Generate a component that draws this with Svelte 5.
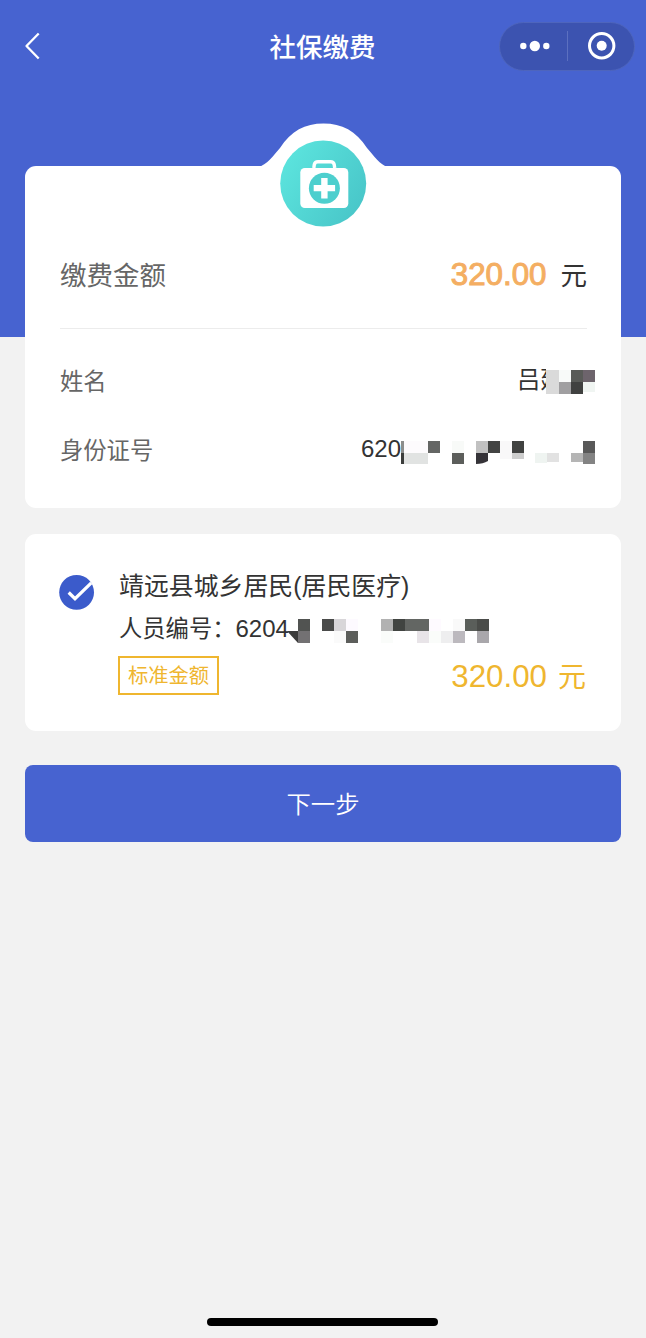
<script>
  const payment = { amount: '320.00', unit: '元', name: '吕廷', idPrefix: '620', personPrefix: '6204' };

  // mosaic cells: [x, y, width, height, colour]
  const nameCells = [
    [0, 4, 13, 24, '#dadada'], [13, 4, 12, 12, '#f8faf9'], [25, 4, 12, 12, '#595b58'], [37, 4, 12, 12, '#6d646c'],
    [13, 16, 12, 12, '#a09fa1'], [25, 16, 12, 12, '#404140'], [37, 16, 12, 10, '#f0f5f2']
  ];
  const idCells = [
    [0, 0, 3, 12, '#8c8e8c'], [0, 12, 3, 11, '#3b3d3b'], [3, 0, 24, 12, '#fdfbfd'], [3, 12, 24, 11, '#e1e3e2'],
    [27, 0, 12, 12, '#646664'], [51, 0, 12, 12, '#f8faf8'], [51, 12, 12, 11, '#5c5e5b'], [75, 0, 12, 12, '#c1c1c1'],
    [87, 0, 12, 12, '#434443'], [99, 0, 12, 18, '#f9f8f9'], [111, 0, 12, 12, '#414241'], [111, 12, 12, 6, '#cdcdcd'],
    [134, 12, 12, 10, '#eff4f1'], [146, 12, 12, 9, '#e2e2e2'], [170, 12, 12, 9, '#b5b5b5'],
    [182, 0, 12, 12, '#595959'], [182, 12, 12, 11, '#838383']
  ];
  const personCells = [
    [11, 0, 12, 12, '#515351'], [11, 12, 12, 12, '#737173'], [35, 0, 12, 12, '#4a4b4a'], [47, 0, 12, 12, '#d8d6d9'],
    [47, 12, 12, 12, '#fafafa'], [59, 0, 12, 12, '#fdfaff'], [59, 12, 12, 12, '#5c5e5b'], [94, 0, 12, 12, '#b2b2b2'],
    [94, 12, 12, 12, '#fafcfa'], [106, 0, 12, 12, '#414441'], [118, 0, 24, 12, '#636663'], [130, 12, 12, 12, '#e8e4e8'],
    [142, 0, 12, 12, '#fefaff'], [142, 12, 12, 12, '#fafcfa'], [154, 12, 12, 12, '#eeeeef'], [166, 0, 12, 12, '#f9f9f9'],
    [166, 12, 12, 12, '#bcb9be'], [178, 0, 12, 12, '#5a5e5a'], [190, 0, 12, 12, '#4a4c49'], [190, 12, 12, 12, '#a9a7ab']
  ];
</script>

{#snippet cells(list)}
  {#each list as [x, y, width, height, fill]}
    <rect {x} {y} {width} {height} {fill} />
  {/each}
{/snippet}

<div class="page">
  <header class="hero">
    <nav class="navbar">
      <svg class="back" width="16" height="28" viewBox="0 0 16 28" aria-label="返回">
        <path d="M14.7 1.5 2.5 14 14.7 26.5" fill="none" stroke="#fff" stroke-width="2.3" stroke-linejoin="round" />
      </svg>
      <h1 class="title">社保缴费</h1>
      <div class="capsule">
        <svg width="67" height="46" viewBox="0 0 67 46">
          <circle cx="23.3" cy="23" r="3.2" fill="#fff" />
          <circle cx="34.8" cy="23" r="5.2" fill="#fff" />
          <circle cx="46.3" cy="23" r="3.2" fill="#fff" />
        </svg>
        <span class="capsule-line"></span>
        <svg width="66" height="46" viewBox="0 0 66 46">
          <circle cx="33.7" cy="22.7" r="12.2" fill="none" stroke="#fff" stroke-width="3" />
          <circle cx="33.7" cy="22.7" r="5" fill="#fff" />
        </svg>
      </div>
    </nav>
  </header>

  <main class="content">
    <section class="card summary">
      <svg class="badge" width="130" height="106" viewBox="0 0 130 106">
        <defs>
          <linearGradient id="teal" x1="0" y1="0.2" x2="1" y2="0.8">
            <stop offset="0" stop-color="#5ce5de" />
            <stop offset="1" stop-color="#48c5c8" />
          </linearGradient>
        </defs>
        <path d="M0 44C9 42 15 33 22 25C33 8 47 .6 65.5 .6S98 8 109 25C116 33 122 42 130 44V50H0Z" fill="#fff" />
        <circle cx="65.2" cy="60.6" r="43" fill="url(#teal)" />
        <path d="M55.8 45L56.3 41.5Q57 38.8 60 38.8H72.5Q75.5 38.8 76.2 41.5L76.7 45" fill="none" stroke="#fff" stroke-width="3.4" />
        <rect x="42.3" y="45" width="48" height="40" rx="4.5" fill="#fff" />
        <circle cx="66.4" cy="65.3" r="15.5" fill="#4dcfce" />
        <path d="M63.2 55h6.4v7.1h7.5v6.2h-7.5v7.3h-6.4v-7.3h-7.5v-6.2h7.5z" fill="#fff" />
      </svg>

      <div class="row amount-row">
        <span class="amount-label">缴费金额</span>
        <span class="amount"><b>{payment.amount}</b><span class="unit">{payment.unit}</span></span>
      </div>
      <div class="row name-row">
        <span>姓名</span>
        <span class="value name-value">
          {payment.name}
          <svg class="mask mask-name" width="49" height="28">{@render cells(nameCells)}</svg>
        </span>
      </div>
      <div class="row id-row">
        <span>身份证号</span>
        <span class="value id-value">
          {payment.idPrefix}
          <svg class="mask mask-id" width="194" height="24">
            {@render cells(idCells)}
            <path d="M75 12h12v8q-5 3-12 3z" fill="#353338" />
          </svg>
        </span>
      </div>
    </section>

    <section class="card plan">
      <svg class="check" width="36" height="36" viewBox="0 0 36 36">
        <circle cx="17.6" cy="18.4" r="17.4" fill="#3b5bcb" />
        <path d="M9.7 18.5 16 24.7 32.3 8.8" fill="none" stroke="#fff" stroke-width="3.2" />
      </svg>
      <div class="plan-body">
        <h2 class="plan-title">靖远县城乡居民(居民医疗)</h2>
        <p class="person">
          人员编号：<span class="digits">{payment.personPrefix}</span>
          <svg class="mask mask-person" width="202" height="24">
            {@render cells(personCells)}
            <path d="M0 12h11v12z" fill="#3b3b3b" />
          </svg>
        </p>
        <div class="standard">
          <span class="tag">标准金额</span>
          <span class="price">{payment.amount}<span class="price-unit">{payment.unit}</span></span>
        </div>
      </div>
    </section>

    <button class="next" type="button">下一步</button>
  </main>

  <div class="home-indicator"></div>
</div>

<style>
  :global(body) {
    background: #f2f2f2;
  }

  .page {
    box-sizing: border-box;
    display: flex;
    flex-direction: column;
    height: 1338px;
    overflow: hidden;
    background: #f2f2f2;
    color: #333;
    font-family: "Liberation Sans", "Noto Sans CJK SC", sans-serif;
    font-size: 23.3px;
  }

  .hero {
    flex: none;
    height: 337px;
    background: #4763d0;
  }

  .navbar {
    box-sizing: border-box;
    display: grid;
    grid-template-columns: 146px 1fr 146px;
    align-items: center;
    height: 92px;
    padding: 0 11px 0 0;
  }

  .back {
    margin-left: 24px;
  }

  .title {
    margin: 0;
    padding: 3px 0 0 10px;
    color: #fff;
    font-size: 26.5px;
    font-weight: 500;
    line-height: 40px;
    text-align: center;
  }

  .capsule {
    box-sizing: border-box;
    display: flex;
    align-items: center;
    justify-self: end;
    width: 136px;
    height: 49px;
    border: 1px solid #4e65bd;
    border-radius: 25px;
    background: #3c53b0;
  }

  .capsule-line {
    width: 1px;
    height: 30px;
    background: #5c70c0;
  }

  .content {
    display: flex;
    flex-direction: column;
    margin: -171px 25px 0;
  }

  .card {
    box-sizing: border-box;
    position: relative;
    border-radius: 11px;
    background: #fff;
  }

  .summary {
    height: 342px;
    padding: 55px 34px 0 35px;
    color: #666;
  }

  .badge {
    position: absolute;
    top: -43px;
    left: 233px;
  }

  .row {
    display: flex;
    align-items: center;
    justify-content: space-between;
  }

  .amount-row {
    box-sizing: border-box;
    height: 108px;
    padding-bottom: 3px;
    border-bottom: 1px solid #ececec;
  }

  .amount-label {
    font-size: 26.5px;
  }

  .amount {
    display: flex;
    align-items: baseline;
    gap: 14px;
    color: #333;
  }

  .amount b {
    color: #f4ae62;
    font-size: 31.3px;
    font-weight: 400;
    -webkit-text-stroke: 1px #f4ae62;
  }

  .unit {
    font-size: 26.5px;
  }

  .name-row {
    height: 70px;
    padding-top: 16px;
  }

  .id-row {
    height: 69px;
    margin-top: -17px;
    padding-top: 16px;
  }

  .value {
    position: relative;
    color: #333;
    line-height: 34px;
  }

  .name-value {
    width: 70px;
  }

  .id-value {
    width: 226px;
    font-size: 24px;
  }

  .mask {
    position: absolute;
  }

  .mask-name {
    top: 3px;
    left: 29px;
    background: #fff;
  }

  .mask-id {
    top: 9px;
    left: 40px;
    background: #fff;
  }

  .plan {
    display: flex;
    gap: 24px;
    height: 197px;
    margin-top: 26px;
    padding: 33px 35px 0 34px;
  }

  .check {
    flex: none;
    margin-top: 7px;
  }

  .plan-body {
    flex: 1;
  }

  .plan-title {
    margin: 0;
    font-size: 24.9px;
    font-weight: 400;
    line-height: 38px;
  }

  .person {
    position: relative;
    margin: 5px 0 0;
    line-height: 38px;
    white-space: nowrap;
  }

  .digits {
    font-size: 24px;
  }

  .mask-person {
    top: 9px;
    left: 168px;
  }

  .standard {
    display: flex;
    align-items: center;
    justify-content: space-between;
    margin: 7px 0 0 -1px;
    color: #efb62f;
  }

  .tag {
    box-sizing: border-box;
    width: 101px;
    height: 39px;
    border: 2px solid #efb62f;
    font-size: 20.3px;
    line-height: 37px;
    text-align: center;
  }

  .price {
    display: flex;
    align-items: baseline;
    gap: 11px;
    padding-top: 4px;
    font-size: 31.3px;
    line-height: 36px;
  }

  .price-unit {
    font-size: 28px;
  }

  .next {
    height: 77px;
    margin-top: 34px;
    padding: 0 0 3px;
    border: 0;
    border-radius: 8px;
    background: #4763d0;
    color: #fff;
    font: 350 24.4px "Noto Sans CJK SC", sans-serif;
  }

  .home-indicator {
    flex: none;
    width: 231px;
    height: 8px;
    margin: auto auto 12px 207px;
    border-radius: 4px;
    background: #000;
  }
</style>
